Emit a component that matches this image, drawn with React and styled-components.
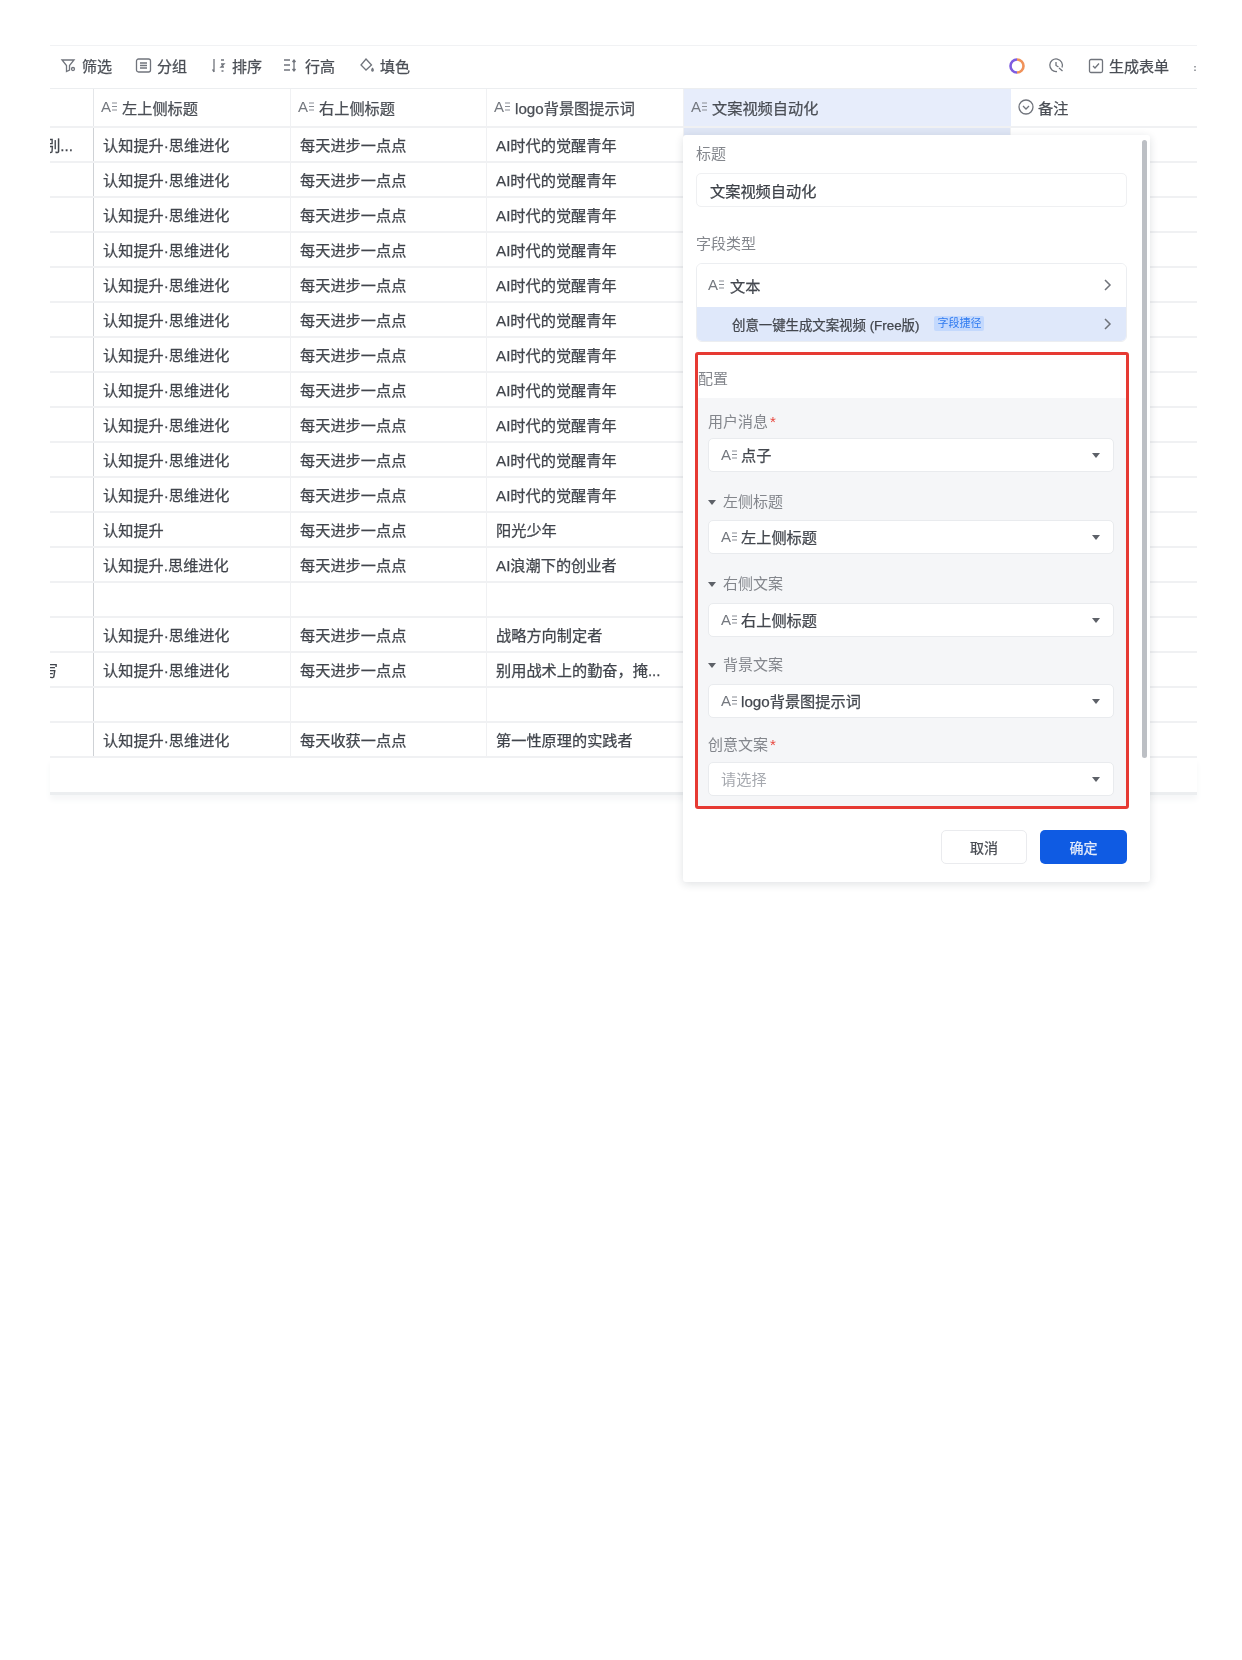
import React from 'react';
import styled, { createGlobalStyle } from 'styled-components';

const Global = createGlobalStyle`
  html, body { margin: 0; padding: 0; background: #fff; }
  body { font-family: "Liberation Sans", "Noto Sans CJK SC", sans-serif; }
`;
const Page = styled.div`
  position: relative; width: 1242px; height: 1660px; padding: 45px 0 0 50px; box-sizing: border-box;
  overflow: hidden; filter: blur(0.7px); color: #3c4048; -webkit-text-stroke: 0.25px currentColor;
`;
const Board = styled.div`width: 1147px; display: flex; flex-direction: column;`;
const Toolbar = styled.div`
  height: 44px; box-sizing: border-box; display: flex; align-items: center; padding: 0 0 3px 10px;
  border-top: 1px solid #f1f2f4; border-bottom: 1px solid #eceef0; font-size: 15px; color: #4a4e55;
`;
const Tool = styled.div`display: flex; align-items: center; gap: 5px; width: ${p => p.$w}px; flex: none; white-space: nowrap;`;
const Spacer = styled.div`flex: 1;`;
const Ico = styled.svg`flex: none; stroke: #70747c; fill: none; stroke-width: 1.3;`;
const Row = styled.div`
  display: grid; grid-template-columns: 44px 197px 196px 197px 327px 186px;
  height: ${p => p.$h || 35}px; box-sizing: border-box; border-bottom: 2px solid #f0f1f3; font-size: 15.2px;
`;
const Cell = styled.div`
  display: flex; align-items: center; overflow: hidden; white-space: nowrap; padding: 0 0 2px 9px;
  border-right: 1px solid #f0f1f3; box-sizing: border-box; color: #41454c;
  &:first-child { border-right: 1px solid #cfd2d6; padding: 0 ${p => p.$end ? 20 : 0}px 2px 0; justify-content: ${p => p.$end ? 'flex-end' : 'flex-start'}; }
  &:last-child { border-right: none; }
`;
const BandCell = styled(Cell)`background: ${p => p.$band ? 'linear-gradient(#dfe6f5 8px, transparent 8px)' : 'none'};`;
const HeadCell = styled(Cell)`
  padding-left: 7px; gap: 4px; font-size: 15.2px; color: #4a4e55;
  background: ${p => p.$sel ? '#e7edfb' : '#fff'};
  border-right-color: ${p => p.$sel ? '#e7edfb' : '#f0f1f3'};
  &:first-child { border-right-color: #e4e6e9; }
`;
const Clip = styled.span`display: block; width: 8px; overflow: hidden; direction: rtl; flex: none;`;
const Footer = styled.div`
  height: 34px; border-bottom: 3px solid #eceef0; box-shadow: 0 5px 6px #f6f7f8;
`;
const AMark = styled.span`display: inline-flex; align-items: center; gap: 1px; color: #74787f; font-size: 15px; flex: none; margin-right: ${p => p.$mr || 0}px; -webkit-text-stroke: 0;`;
const Panel = styled.div`
  position: absolute; left: 683px; top: 135px; width: 467px; height: 747px; box-sizing: border-box;
  background: #fff; padding: 9px 23px 0 13px; box-shadow: 0 2px 8px rgba(30,40,60,.14); border-radius: 3px;
`;
const ScrollThumb = styled.div`
  position: absolute; right: 3px; top: 5px; width: 5px; height: 618px; border-radius: 3px; background: #bcbfc4;
`;
const Label = styled.div`height: 20px; line-height: 20px; font-size: 15px; color: #83868c; margin-top: ${p => p.$mt || 0}px; display: flex; align-items: center; gap: 7px; -webkit-text-stroke: 0;`;
const Input = styled.div`
  height: 34px; margin-top: 9px; border: 1px solid #eff0f2; border-radius: 5px; box-sizing: border-box;
  display: flex; align-items: center; padding: 0 0 1px 13px; font-size: 15.2px; color: #3e4249;
`;
const TypeGroup = styled.div`margin-top: 9px; border: 1px solid #eceef1; border-radius: 6px; overflow: hidden;`;
const TypeRow = styled.div`
  display: flex; align-items: center; height: ${p => p.$h}px; box-sizing: border-box; padding: 0 14px ${p => p.$pb}px ${p => p.$pl}px; font-size: ${p => p.$fs}px; color: #43474e;
  background: ${p => p.$blue ? '#dfe8fa' : '#fff'}; white-space: nowrap;
`;
const Tag = styled.span`margin-left: 15px; padding: 0 3px; background: #c4d9fd; color: #2f7bf0; font-size: 11px; line-height: 15px; border-radius: 2px; -webkit-text-stroke: 0;`;
const RedBox = styled.div`margin: 10px -2px 0 -1px; border: 3px solid #e63a33; border-radius: 3px; height: 457px; box-sizing: border-box; background: #fff;`;
const ConfigTitle = styled.div`height: 43px; padding-top: 14px; box-sizing: border-box; font-size: 15px; line-height: 20px; color: #83868c; -webkit-text-stroke: 0;`;
const Section = styled.div`background: #f5f6f8; height: 408px; padding: 14px 12px 0 10px; box-sizing: border-box;`;
const Star = styled.span`color: #e8453c; margin-left: -5px;`;
const Caret = styled.span`width: 0; height: 0; border-left: 4px solid transparent; border-right: 4px solid transparent; border-top: 5px solid #5d6168; flex: none;`;
const Select = styled.div`
  height: 34px; margin-top: ${p => p.$mt}px; background: #fff; border: 1px solid #e9ebee; border-radius: 5px; box-sizing: border-box;
  display: flex; align-items: center; justify-content: space-between; padding: 0 13px 0 12px; font-size: 15.2px; color: ${p => p.$ph ? '#a6a9af' : '#43474e'};
`;
const SelectText = styled.span`display: flex; align-items: center; gap: 4px; padding-bottom: 2px;`;
const Placeholder = styled.span`padding-bottom: 2px; -webkit-text-stroke: 0;`;
const Buttons = styled.div`display: flex; justify-content: flex-end; gap: 13px; margin-top: 21px;`;
const Btn = styled.div`
  width: ${p => p.$w}px; height: 34px; box-sizing: border-box; border-radius: 5px; display: flex; align-items: center; justify-content: center; font-size: 14px;
  background: ${p => p.$primary ? '#0f5be3' : '#fff'}; color: ${p => p.$primary ? '#e3ebfb' : '#4a4e55'};
  border: ${p => p.$primary ? 'none' : '1px solid #eaebee'};
`;

const A = ({ mr }) => (
  <AMark $mr={mr}>A
    <svg width="5" height="9" viewBox="0 0 5 9" stroke="#8a8e95" strokeWidth="1.2"><path d="M0 1h5M0 4.5h5M0 8h5" /></svg>
  </AMark>
);
const Chevron = () => (
  <svg width="9" height="14" viewBox="0 0 9 14" fill="none" stroke="#6f737a" strokeWidth="1.5" style={{ flex: 'none' }}><path d="M2 2l5 5-5 5" /></svg>
);

const normal = ['认知提升·思维进化', '每天进步一点点', 'AI时代的觉醒青年'];
const rows = [
  { a: '别...', end: true, band: true, c: normal }, { c: normal }, { c: normal }, { c: normal }, { c: normal }, { c: normal },
  { c: normal }, { c: normal }, { c: normal }, { c: normal }, { c: normal },
  { c: ['认知提升', '每天进步一点点', '阳光少年'] },
  { c: ['认知提升.思维进化', '每天进步一点点', 'AI浪潮下的创业者'] },
  { c: ['', '', ''] },
  { c: ['认知提升·思维进化', '每天进步一点点', '战略方向制定者'] },
  { a: '写', clip: true, c: ['认知提升·思维进化', '每天进步一点点', '别用战术上的勤奋，掩...'] },
  { c: ['', '', ''] },
  { c: ['认知提升·思维进化', '每天收获一点点', '第一性原理的实践者'] },
];

export default function App() {
  return (
    <>
      <Global />
      <Page>
        <Board>
          <Toolbar>
            <Tool $w={75}>
              <Ico width="17" height="17" viewBox="0 0 17 17"><path d="M2 3h12l-4.5 5.5V13l-3 1.5v-6z" /><circle cx="13" cy="12" r="1.5" /></Ico>筛选
            </Tool>
            <Tool $w={75}>
              <Ico width="17" height="17" viewBox="0 0 17 17"><rect x="1.5" y="2" width="14" height="13" rx="2" /><path d="M5 6h7M5 8.5h7M5 11h7" /></Ico>分组
            </Tool>
            <Tool $w={73}>
              <Ico width="17" height="17" viewBox="0 0 17 17"><path d="M4 2v13M2.5 12.5L4 15M11 3h3M11 7h3l-3 3h3M11.5 14h2" /></Ico>排序
            </Tool>
            <Tool $w={75}>
              <Ico width="17" height="17" viewBox="0 0 17 17"><path d="M1 3h6M1 8h6M1 13h6M11 3v11M9.5 5L11 3l1.5 2M9.5 12l1.5 2 1.5-2" /></Ico>行高
            </Tool>
            <Tool $w={70}>
              <Ico width="17" height="17" viewBox="0 0 17 17"><path d="M8 2l5.5 6L8 13 3 8z" /><path d="M14.5 11.5c-1 1.3-1 2.3 0 2.5 1-.2 1-1.2 0-2.5z" /></Ico>填色
            </Tool>
            <Spacer />
            <Tool $w={40}>
              <svg width="18" height="18" viewBox="0 0 18 18" fill="none" strokeWidth="2.6">
                <path d="M9 2.5a6.5 6.5 0 0 1 0 13" stroke="#f0925a" />
                <path d="M9 15.5a6.5 6.5 0 0 1 0-13" stroke="#7d5ce0" />
              </svg>
            </Tool>
            <Tool $w={40}>
              <Ico width="17" height="17" viewBox="0 0 17 17"><path d="M14 10.5A6.3 6.3 0 1 0 9 14.5" /><path d="M8 5v3.5l2.5 1.5M11 11l3.5 3" /></Ico>
            </Tool>
            <Tool $w={105}>
              <Ico width="16" height="16" viewBox="0 0 16 16"><rect x="1.5" y="1.5" width="13" height="13" rx="1.5" /><path d="M5 8l2 2 4-4.5" /></Ico>生成表单
            </Tool>
            <Tool $w={4}>
              <Ico width="4" height="12" viewBox="0 0 4 12"><path d="M2 6v1.5M2 9.5v1.5" /></Ico>
            </Tool>
          </Toolbar>
          <Row $h={39}>
            <HeadCell />
            <HeadCell><A mr={1} />左上侧标题</HeadCell>
            <HeadCell><A mr={1} />右上侧标题</HeadCell>
            <HeadCell><A mr={1} />logo背景图提示词</HeadCell>
            <HeadCell $sel><A mr={1} />文案视频自动化</HeadCell>
            <HeadCell>
              <Ico width="16" height="16" viewBox="0 0 16 16"><circle cx="8" cy="8" r="7" /><path d="M5 7l3 3 3-3" /></Ico>备注
            </HeadCell>
          </Row>
          {rows.map((r, i) => (
            <Row key={i}>
              <Cell $end={r.end}>{r.clip ? <Clip>{r.a}</Clip> : r.a}</Cell>
              <Cell>{r.c[0]}</Cell>
              <Cell>{r.c[1]}</Cell>
              <Cell>{r.c[2]}</Cell>
              <BandCell $band={r.band} />
              <Cell />
            </Row>
          ))}
          <Footer />
        </Board>
        <Panel>
          <ScrollThumb />
          <Label>标题</Label>
          <Input>文案视频自动化</Input>
          <Label $mt={27}>字段类型</Label>
          <TypeGroup>
            <TypeRow $h={43} $pl={11} $pb={2} $fs={15.2}>
              <A mr={6} />文本<Spacer /><Chevron />
            </TypeRow>
            <TypeRow $h={34} $blue $pl={35} $pb={1} $fs={13.4}>
              创意一键生成文案视频 (Free版)<Tag>字段捷径</Tag><Spacer /><Chevron />
            </TypeRow>
          </TypeGroup>
          <RedBox>
            <ConfigTitle>配置</ConfigTitle>
            <Section>
              <Label>用户消息<Star>*</Star></Label>
              <Select $mt={6}><SelectText><A />点子</SelectText><Caret /></Select>
              <Label $mt={20}><Caret />左侧标题</Label>
              <Select $mt={8}><SelectText><A />左上侧标题</SelectText><Caret /></Select>
              <Label $mt={20}><Caret />右侧文案</Label>
              <Select $mt={9}><SelectText><A />右上侧标题</SelectText><Caret /></Select>
              <Label $mt={18}><Caret />背景文案</Label>
              <Select $mt={9}><SelectText><A />logo背景图提示词</SelectText><Caret /></Select>
              <Label $mt={17}>创意文案<Star>*</Star></Label>
              <Select $mt={7} $ph><Placeholder>请选择</Placeholder><Caret /></Select>
            </Section>
          </RedBox>
          <Buttons>
            <Btn $w={86}>取消</Btn>
            <Btn $w={87} $primary>确定</Btn>
          </Buttons>
        </Panel>
      </Page>
    </>
  );
}
